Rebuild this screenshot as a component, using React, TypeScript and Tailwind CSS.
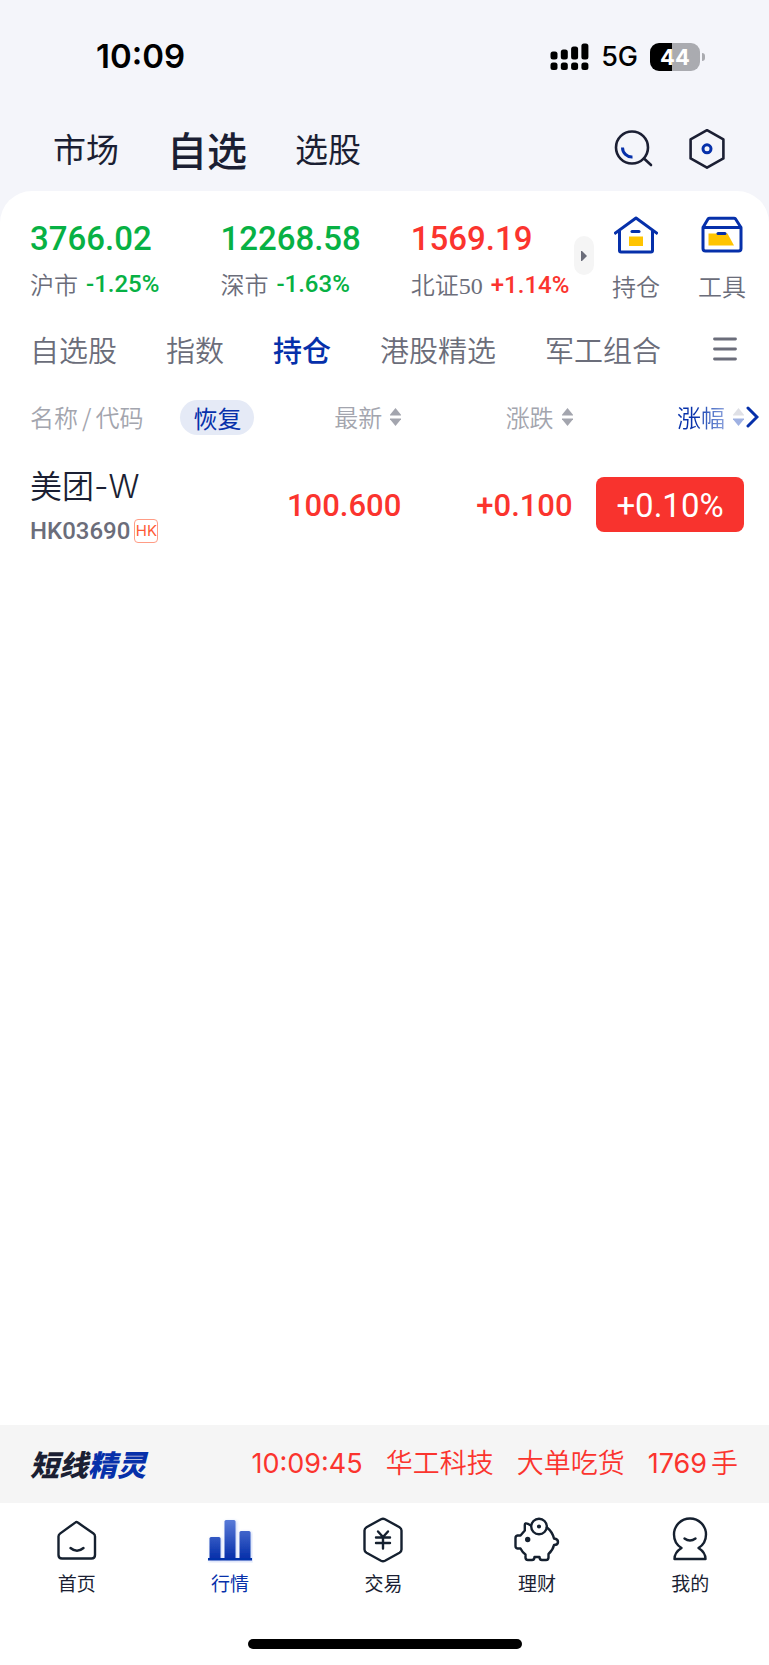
import clsx from 'clsx';
import type { ReactNode } from 'react';

type Trend = 'up' | 'down';

const indices: { name: string; suffix?: string; value: string; change: string; trend: Trend }[] = [
  { name: '沪市', value: '3766.02', change: '-1.25%', trend: 'down' },
  { name: '深市', value: '12268.58', change: '-1.63%', trend: 'down' },
  { name: '北证', suffix: '50', value: '1569.19', change: '+1.14%', trend: 'up' },
];

const groups = ['自选股', '指数', '持仓', '港股精选', '军工组合'];

const SignalIcon = () => (
  <svg width="39" height="28" viewBox="0 0 39 28" aria-hidden="true">
    <rect x="0.5" y="8.5" width="7" height="8" rx="2.5" />
    <rect x="10.8" y="6.5" width="7" height="10" rx="2.5" />
    <rect x="21.1" y="3.5" width="7" height="13" rx="2.5" />
    <rect x="31.4" y="0.5" width="7" height="16" rx="2.5" />
    <rect x="0.5" y="19.5" width="7" height="7.5" rx="2.5" />
    <rect x="10.8" y="19.5" width="7" height="7.5" rx="2.5" />
    <rect x="21.1" y="19.5" width="7" height="7.5" rx="2.5" />
    <rect x="31.4" y="19.5" width="7" height="7.5" rx="2.5" />
  </svg>
);

const SearchIcon = () => (
  <svg width="40" height="40" viewBox="0 0 40 40" fill="none" strokeLinecap="round" aria-hidden="true">
    <circle cx="19" cy="18.5" r="16" stroke="#1b1f33" strokeWidth="2.6" />
    <path d="M31 29.5 38 36" stroke="#1b1f33" strokeWidth="2.6" />
    <path d="M9.500 18.500a9.500 9.500 0 0 0 10 9.500" stroke="#0630aa" strokeWidth="3" strokeLinecap="butt" />
  </svg>
);

const HexagonIcon = () => (
  <svg width="40" height="40" viewBox="0 0 40 40" fill="none" aria-hidden="true">
    <path d="M20 1.200 36.400 10.400v19L20 38.600 3.600 29.400v-19Z" stroke="#1b1f33" strokeWidth="2.6" strokeLinejoin="round" />
    <circle cx="20" cy="19.8" r="4" stroke="#0630aa" strokeWidth="3" />
  </svg>
);

const HoldingsIcon = () => (
  <svg width="44" height="38" viewBox="0 0 44 38" fill="none" aria-hidden="true">
    <path d="M1.500 17 22 2l20.500 15" stroke="#0630aa" strokeWidth="3" strokeLinecap="square" strokeLinejoin="round" />
    <path d="M5.500 15v19.500q0 1.500 1.500 1.500h30q1.500 0 1.500-1.500V15" stroke="#0630aa" strokeWidth="3" />
    <path d="M18 15.500h7" stroke="#0630aa" strokeWidth="3" strokeLinecap="round" />
    <path d="M15 20.500h14V30H15z" fill="#ffc400" />
  </svg>
);

const ToolsIcon = () => (
  <svg width="44" height="38" viewBox="0 0 44 38" fill="none" aria-hidden="true">
    <path d="M3 11.500h38v21q0 2.500-2.500 2.500h-33q-2.500 0-2.500-2.500z" stroke="#0630aa" strokeWidth="3" strokeLinejoin="round" />
    <path d="M3 11.500 8 3q.6-.8 1.600-.8h24.400q1 0 1.600.8l5.400 8.500" stroke="#0630aa" strokeWidth="3" />
    <path d="M8.500 17.500h19l6.500 12H8.500z" fill="#ffc400" />
    <path d="M18 17.500h7" stroke="#0630aa" strokeWidth="3" strokeLinecap="round" />
  </svg>
);

const SortIcon = ({ active = false }: { active?: boolean }) => (
  <svg width="11" height="18" viewBox="0 0 11 18" aria-hidden="true">
    <path d="M5.500 0 11 6.800v.7H0v-.7z" fill={active ? '#dfe0e6' : '#a3a5ae'} />
    <path d="M5.500 18 11 11.200v-.7H0v.7z" fill={active ? '#9fb1e2' : '#a3a5ae'} />
  </svg>
);

const HomeIcon = () => (
  <svg width="46" height="46" viewBox="0 0 46 46" fill="none" stroke="#15202f" strokeWidth="2.4" strokeLinecap="round" strokeLinejoin="round" aria-hidden="true">
    <path d="M21.200 5.600q1.300-1 2.600 0l15.700 11q1.500 1.100 1.500 3v18.400q0 3.500-3.500 3.500H8q-3.500 0-3.500-3.500V19.600q0-1.900 1.500-3z" />
    <path d="M16.500 31q6.500 5.500 13 0" />
  </svg>
);

const QuotesIcon = () => (
  <svg width="46" height="46" viewBox="0 0 46 46" aria-hidden="true">
    <defs>
      <linearGradient id="bars" x1="0" y1="0" x2="0" y2="46" gradientUnits="userSpaceOnUse">
        <stop offset="0" stopColor="#5f80dc" />
        <stop offset="0.9" stopColor="#0630aa" />
      </linearGradient>
      <filter id="bar-shadow" x="-20%" y="-20%" width="140%" height="140%">
        <feDropShadow dx="1" dy="1" stdDeviation="1.5" floodColor="#2f5fe0" floodOpacity="0.3" />
      </filter>
    </defs>
    <g fill="url(#bars)" filter="url(#bar-shadow)">
      <rect x="2.5" y="20" width="11" height="23" rx="1.5" />
      <rect x="17.5" y="3" width="11" height="40" rx="1.5" />
      <rect x="32.5" y="14" width="11" height="29" rx="1.5" />
      <rect x="1" y="41" width="44" height="2.5" />
    </g>
  </svg>
);

const TradeIcon = () => (
  <svg width="46" height="46" viewBox="0 0 46 46" fill="none" stroke="#15202f" strokeWidth="2.4" strokeLinecap="round" strokeLinejoin="round" aria-hidden="true">
    <path d="M21 2.200q2-1 4 0l14.500 8q2 1.200 2 3.400v18.800q0 2.200-2 3.400l-14.500 8q-2 1-4 0l-14.500-8q-2-1.200-2-3.400V13.600q0-2.200 2-3.400z" />
    <path d="m18 14.500 5 5.500 5-5.500M16 20.500h14M16 26h14M23 20.500v11" />
  </svg>
);

const WealthIcon = () => (
  <svg width="46" height="46" viewBox="0 0 46 46" fill="none" stroke="#15202f" strokeWidth="2.4" strokeLinecap="round" strokeLinejoin="round" aria-hidden="true">
    <circle cx="25" cy="9.5" r="7.8" />
    <circle cx="25" cy="9.5" r="0.9" fill="#15202f" />
    <circle cx="13.7" cy="22.5" r="1.5" fill="#15202f" />
    <path d="M16.800 8.500 13.800 6.800q-3-1.300-3 1.200v5.500L6.500 18.500h-3q-2 .3-2 2.500v8q0 2.200 2 2.500h3q2 4 5 6v3q0 2.500 2.500 2.500h4q2.500 0 2.500-3h5q0 3 2.500 3h4q2.500 0 2.500-2.500V37q4.500-4 5.500-9 4 0 4-3t-4-3.500Q38.500 15 33 10.500" />
  </svg>
);

const MeIcon = () => (
  <svg width="46" height="46" viewBox="0 0 46 46" fill="none" stroke="#15202f" strokeWidth="2.4" strokeLinecap="round" strokeLinejoin="round" aria-hidden="true">
    <path d="M14.500 31C9.500 28 7 22.500 7 17.500a16 16 0 0 1 32 0c0 5-2.500 10.500-7.500 13.500 4 2.500 7 6.500 7 11H7.500c0-4.500 3-8.500 7-11Z" />
    <path d="M17.500 21.500q5.500 4 11 0" />
  </svg>
);

const tabs: { label: string; icon: ReactNode }[] = [
  { label: '首页', icon: <HomeIcon /> },
  { label: '行情', icon: <QuotesIcon /> },
  { label: '交易', icon: <TradeIcon /> },
  { label: '理财', icon: <WealthIcon /> },
  { label: '我的', icon: <MeIcon /> },
];

export default function App() {
  return (
    <div className="flex min-h-screen flex-col bg-[#f4f5fa] font-['Noto_Sans_CJK_SC',sans-serif] text-[#1b1f33]">
      {/* Status bar */}
      <div className="flex h-[114px] items-center justify-between pr-16 pl-24 font-[Inter,sans-serif] text-black">
        <span className="text-[33px] font-semibold">10:09</span>
        <div className="flex items-center">
          <SignalIcon />
          <span className="ml-3 text-[27px] font-medium">5G</span>
          <div className="ml-3 flex h-7 w-[50px] items-center justify-center rounded-[9px] bg-linear-to-r from-black from-45% to-[#aaabb0] to-45% text-[22px] font-bold text-white">
            44
          </div>
          <span className="ml-0.5 h-2 w-[3px] rounded-r-full bg-[#aaabb0]" />
        </div>
      </div>

      {/* Header */}
      <header className="flex h-[77px] items-center justify-between pr-[42px] pb-2 pl-[53px]">
        <nav className="flex items-center gap-12">
          <a href="#market" className="text-[33px]">市场</a>
          <a href="#watchlist" className="text-[40px] font-medium">自选</a>
          <a href="#picker" className="text-[33px]">选股</a>
        </nav>
        <div className="flex gap-[34px]">
          <button type="button" aria-label="搜索"><SearchIcon /></button>
          <button type="button" aria-label="设置"><HexagonIcon /></button>
        </div>
      </header>

      <main className="flex flex-1 flex-col rounded-t-[32px] bg-white">
        {/* Market indices */}
        <section className="flex pt-[25px] pr-[23px] pl-[30px]">
          <div className="grid flex-1 grid-cols-[35%_35%_30%]">
            {indices.map((item) => (
              <div key={item.name} className="whitespace-nowrap">
                <div
                  className={clsx(
                    "font-[Roboto,sans-serif] text-[33px] leading-[46px] font-medium",
                    item.trend === 'up' ? 'text-[#fb342e]' : 'text-[#07b144]'
                  )}
                >
                  {item.value}
                </div>
                <div className="flex items-center gap-2">
                  <span className="text-2xl leading-[44px] font-[350] text-[#6b6d7a]">
                    {item.name}
                    {item.suffix && <span className="font-['Liberation_Serif',serif]">{item.suffix}</span>}
                  </span>
                  <span
                    className={clsx(
                      "font-[Roboto,sans-serif] text-2xl leading-[44px] font-medium",
                      item.trend === 'up' ? 'text-[#fb342e]' : 'text-[#07b144]'
                    )}
                  >
                    {item.change}
                  </span>
                </div>
              </div>
            ))}
          </div>
          <button type="button" aria-label="展开" className="mt-5 flex h-[39px] w-5 items-center justify-center rounded-full bg-[#f5f5f5]">
            <svg width="6" height="10" viewBox="0 0 6 10" aria-hidden="true">
              <path d="M0 0h1l5 5-5 5H0z" fill="#6b6d7a" />
            </svg>
          </button>
          <div className="ml-[18px] flex gap-[38px] text-2xl font-[350] text-[#6b6d7a]">
            <button type="button" className="flex w-12 flex-col items-center">
              <HoldingsIcon />
              <span className="leading-[63px]">持仓</span>
            </button>
            <button type="button" className="flex w-12 flex-col items-center">
              <ToolsIcon />
              <span className="leading-[63px]">工具</span>
            </button>
          </div>
        </section>

        {/* Watchlist groups */}
        <nav className="flex h-16 items-center justify-between pr-8 pl-[30px]">
          <div className="flex gap-[49px] text-[29px] leading-[48px] font-[350] whitespace-nowrap text-[#6b6d7a]">
            {groups.map((group) => (
              <a key={group} href="#group" className={clsx(group === '持仓' && 'font-medium text-[#0630aa]')}>
                {group}
              </a>
            ))}
          </div>
          <button type="button" aria-label="分组管理">
            <svg width="24" height="24" viewBox="0 0 24 24" stroke="#6b6d7a" strokeWidth="2.8" strokeLinecap="round" aria-hidden="true">
              <path d="M1.500 2h21M1.500 12h21M1.500 22h21" />
            </svg>
          </button>
        </nav>

        {/* Holdings */}
        <div className="relative mt-2 pr-[25px] pl-[30px]">
          <table className="w-full table-fixed">
            <colgroup>
              <col className="w-[32%]" />
              <col className="w-1/5" />
              <col className="w-[24%]" />
              <col className="w-[24%]" />
            </colgroup>
            <thead className="text-2xl text-[#a3a5ae]">
              <tr className="h-14">
                <th className="font-[350]">
                  <div className="flex items-center justify-between pr-1">
                    <span>名称<span className="px-1">/</span>代码</span>
                    <button type="button" className="h-[35px] rounded-full bg-[#e5eaf6] px-[13px] leading-[35px] font-normal text-[#0630aa]">
                      恢复
                    </button>
                  </div>
                </th>
                <th className="font-[350]">
                  <div className="flex items-center justify-end gap-2">最新<SortIcon /></div>
                </th>
                <th className="font-[350]">
                  <div className="flex items-center justify-end gap-2">涨跌<SortIcon /></div>
                </th>
                <th className="font-[350]">
                  <div className="flex items-center justify-end gap-2">
                    <span className="bg-linear-to-r from-[#0630aa] from-40% to-[#8ea3dc] bg-clip-text text-transparent">涨幅</span>
                    <SortIcon active />
                  </div>
                </th>
              </tr>
            </thead>
            <tbody className="font-[Roboto,sans-serif] text-[31px] font-medium text-[#fb342e]">
              <tr className="h-[118px]">
                <td className="pt-2">
                  <div className="font-[Inter,'Noto_Sans_CJK_SC',sans-serif] text-[32px] leading-[46px] font-[350] text-[#1b1f33]">美团-W</div>
                  <div className="flex items-center gap-1 text-2xl leading-[42px] text-[#6b6d7a]">
                    HK03690
                    <span className="flex size-6 items-center justify-center rounded-sm border border-[#ff9c85] font-[Inter,sans-serif] text-[15px] font-normal text-[#ff5a36]">HK</span>
                  </div>
                </td>
                <td className="pt-1 text-right">100.600</td>
                <td className="pt-1 text-right">+0.100</td>
                <td>
                  <div className="ml-auto h-[55px] w-[148px] rounded-lg bg-[#f8332e] text-center text-[33px] leading-[58px] font-normal text-white">+0.10%</div>
                </td>
              </tr>
            </tbody>
          </table>
          <button type="button" aria-label="更多列" className="absolute top-[17px] right-[10px]">
            <svg width="14" height="22" viewBox="0 0 14 22" fill="none" stroke="#0630aa" strokeWidth="3" strokeLinecap="round" aria-hidden="true">
              <path d="m3 2 9 9-9 9" />
            </svg>
          </button>
        </div>
      </main>

      {/* Ticker */}
      <section className="flex h-[78px] items-center justify-between bg-[#f5f5f5] pr-[31px] pl-[30px]">
        <h2 className="text-[29px] font-black italic">
          短线<span className="text-[#0630aa]">精灵</span>
        </h2>
        <div className="flex items-center gap-[23px] font-[Inter,'Noto_Sans_CJK_SC',sans-serif] text-[27px] font-[350] text-[#fb342e]">
          <span className="font-normal">10:09:45</span>
          <span>华工科技</span>
          <span>大单吃货</span>
          <span><span className="mr-1 font-normal">1769</span>手</span>
        </div>
      </section>

      {/* Tab bar */}
      <footer className="bg-white pt-3.5 pb-4">
        <nav className="grid grid-cols-5 pr-0.5">
          {tabs.map((tab) => (
            <a key={tab.label} href="#tab" className="flex flex-col items-center">
              {tab.icon}
              <span className={clsx('text-[19px] leading-10', tab.label === '行情' && 'text-[#0630aa]')}>{tab.label}</span>
            </a>
          ))}
        </nav>
        <div className="mx-auto mt-9 h-2.5 w-[274px] rounded-full bg-black" />
      </footer>
    </div>
  );
}
